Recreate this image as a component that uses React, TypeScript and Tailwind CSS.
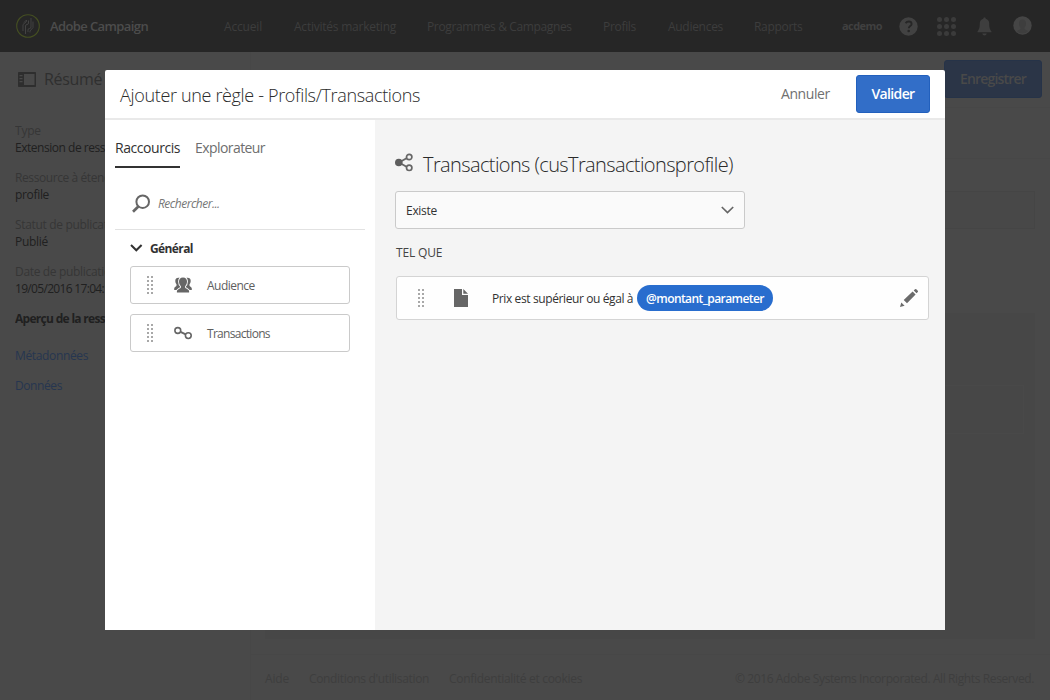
import React from "react";

const nav = [
  { label: "Accueil", style: "w-[70px] tracking-[-0.18px]" },
  { label: "Activités marketing", style: "w-[133px] tracking-[-0.23px]" },
  { label: "Programmes & Campagnes", style: "w-[176px] tracking-[-0.37px]" },
  { label: "Profils", style: "w-[65px] tracking-[-0.31px]" },
  { label: "Audiences", style: "w-[86px] tracking-[-0.29px]" },
  { label: "Rapports", style: "w-[88px] tracking-[-0.3px]" },
];

const facts = [
  { label: "Type", value: "Extension de ressource", labelStyle: "tracking-[-0.2px]", valueStyle: "tracking-[-0.47px]" },
  { label: "Ressource à étendre", value: "profile", labelStyle: "tracking-[-0.41px]", valueStyle: "tracking-[-0.33px]" },
  { label: "Statut de publication", value: "Publié", labelStyle: "tracking-[-0.33px]", valueStyle: "tracking-[-0.29px]" },
  { label: "Date de publication", value: "19/05/2016 17:04:12", labelStyle: "tracking-[-0.33px]", valueStyle: "tracking-[-0.68px]" },
];

function Logo() {
  return (
    <svg className="h-6 w-6 shrink-0" viewBox="0 0 24 24" fill="none">
      <circle cx="12" cy="12" r="11.3" stroke="#454f22" strokeWidth="1.1" />
      <g stroke="#464646" strokeWidth="0.9">
        <path d="M9.500 20V12q0-1.500 1.500-1.500t1.500-1.500V6.500" />
        <path d="M7 17V10.500L10.500 7.500V6L8 8.500" />
        <path d="M15 4v9q0 1.500-1.500 1.500t-1.500 1.500v2" />
        <path d="M17 7.500v6L14 17v1.500" />
      </g>
    </svg>
  );
}

function HelpIcon() {
  return (
    <svg className="h-[19px] w-[19px]" viewBox="0 0 19 19" fill="none">
      <circle cx="9.500" cy="9.500" r="9.200" fill="#424242" />
      <path d="M6.600 6.200Q7.700 4.500 9.700 4.500c1.900 0 2.900 1 2.900 2.400 0 2.100-2.800 2.300-2.800 4.300" stroke="#262626" strokeWidth="1.900" />
      <circle cx="9.700" cy="14" r="1.300" fill="#262626" />
    </svg>
  );
}

function AppsIcon() {
  const steps = [2.5, 9.5, 16.5];
  return (
    <svg className="h-[19px] w-[19px]" viewBox="0 0 19 19" fill="#3b3b3b">
      {steps.map((y) => steps.map((x) => <circle key={`${x}-${y}`} cx={x} cy={y} r="2.500" />))}
    </svg>
  );
}

function BellIcon() {
  return (
    <svg className="h-[19px] w-[15px]" viewBox="0 0 15 19" fill="#3e3e3e">
      <path d="M7.500.5c.8 0 1.200.6 1.200 1.200 2.300.6 3.500 2.400 3.500 4.800 0 4.500.8 6.200 2.300 8v.8H.5v-.8c1.500-1.800 2.300-3.500 2.300-8 0-2.400 1.200-4.200 3.500-4.800C6.300 1.100 6.700.5 7.500.5Z" />
      <path d="M5.200 16.500h4.600Q9.300 18.500 7.500 18.500t-2.300-2Z" />
    </svg>
  );
}

function AvatarIcon() {
  return (
    <svg className="h-[19px] w-[19px]" viewBox="0 0 19 19">
      <circle cx="9.500" cy="9.500" r="9.200" fill="#454545" />
      <path d="M9.500 3.500c2.600 0 3.500 1.900 3.500 4.200 0 1.700-.7 3.200-1.500 4v1.500l3.700 1.800Q13 17.500 9.500 17.500T3.800 15l3.700-1.800v-1.500c-.8-.8-1.500-2.300-1.500-4 0-2.300.9-4.200 3.500-4.200Z" fill="#3e3e3e" />
    </svg>
  );
}

function RailIcon() {
  return (
    <svg className="h-[15px] w-[18px] shrink-0" viewBox="0 0 18 15">
      <path fillRule="evenodd" d="M.8 0h16.400q.8 0 .8.800v13.400q0 .8-.8.800H.8q-.8 0-.8-.8V.8Q0 0 .8 0ZM6 2v11h10.500V2ZM1.500 3v1.200H4.500V3Zm0 3v1.200H4.500V6Zm0 3v1.200H4.500V9Z" fill="#2e2e2e" />
    </svg>
  );
}

function Grip() {
  return (
    <svg className="h-[19px] w-[7px] shrink-0" viewBox="0 0 7 19" fill="#a8a8a8" shapeRendering="crispEdges">
      {[0, 4, 8, 12, 16].map((y) => (
        <g key={y}>
          <rect x="0" y={y} width="2" height="2" />
          <rect x="4" y={y} width="2" height="2" />
        </g>
      ))}
    </svg>
  );
}

function AudienceIcon() {
  return (
    <svg className="h-[16px] w-[18px] shrink-0" viewBox="0 0 18 16" fill="#666">
      <path d="M5.500.8C3 .2 1.300 1.500 1.300 3.800c0 1.500.4 2.600 1.200 3.500v1.300c0 .9-2.300 1.600-2.300 2.900V13h4L7 10V2Z" />
      <path d="M12.500.8c2.500-.6 4.200.7 4.200 3 0 1.500-.4 2.600-1.200 3.500v1.300c0 .9 2.300 1.600 2.300 2.900V13h-4L11 10V2Z" />
      <path d="M9 .5c2.800 0 4 1.700 4 4 0 1.900-.8 3.700-1.900 4.700v1.200c0 1 4 1.600 4 3.800V15.500H2.900v-1.300c0-2.200 4-2.800 4-3.800V9.200C5.800 8.200 5 6.400 5 4.500c0-2.300 1.200-4 4-4Z" stroke="#fff" strokeWidth="1.800" paintOrder="stroke" />
    </svg>
  );
}

function LinkIcon() {
  return (
    <svg className="h-[14px] w-[18px] shrink-0" viewBox="0 0 18 14" fill="none" stroke="#666" strokeWidth="1.600">
      <circle cx="3.800" cy="4.500" r="2.900" />
      <circle cx="14.300" cy="9.600" r="2.900" />
      <path d="M6.500 5.900L11.700 8.300" strokeWidth="2" />
    </svg>
  );
}

function ShareIcon() {
  return (
    <svg className="h-[19px] w-[18px] shrink-0" viewBox="0 0 18 19" fill="none" stroke="#666" strokeWidth="1.700">
      <path d="M4 9.500L12 5M4 9.500l8 4.500" strokeWidth="1.900" />
      <circle cx="3.800" cy="9.500" r="3.800" fill="#5e5e5e" stroke="none" />
      <circle cx="14.200" cy="4" r="2.700" fill="#f4f4f4" />
      <circle cx="14.200" cy="14.800" r="2.700" fill="#f4f4f4" />
    </svg>
  );
}

function RuleCard({ icon, children }: { icon: React.ReactNode; children: React.ReactNode }) {
  return (
    <div className="flex h-[38px] w-[220px] items-center rounded-[3px] border border-[#cacaca] bg-white pl-[16px]">
      <Grip />
      <div className="ml-[20px] flex w-[33px]">{icon}</div>
      {children}
    </div>
  );
}

function Dialog() {
  return (
    <div className="absolute top-[70px] left-[105px] flex h-[560px] w-[840px] flex-col rounded-t-[2px] bg-white">
      <header className="flex h-[50px] shrink-0 items-center border-b-2 border-[#e9e9e9] pr-[15px] pl-[15px]">
        <h1 className="grow pt-[3px] text-[18px] font-light tracking-[-0.34px] text-[#2a2a2a]">Ajouter une règle - Profils/Transactions</h1>
        <button className="w-[75px] pb-[2px] text-left text-[14px] tracking-[-0.42px] text-[#707070]">Annuler</button>
        <button className="h-[38px] w-[74px] rounded-[3px] border border-[#2260bd] bg-[#326ec8] pb-[2px] text-[14px] font-semibold tracking-[-0.64px] text-white">Valider</button>
      </header>
      <div className="flex grow">
        <aside className="w-[270px] shrink-0 px-[10px]">
          <nav className="flex h-[48px] gap-[15px] text-[14px]">
            <span className="flex w-[65px] items-center border-b-2 border-[#323232] pt-[8px] tracking-[-0.45px] whitespace-nowrap text-[#323232]">Raccourcis</span>
            <span className="flex items-center pt-[6px] tracking-[-0.57px] text-[#6e6e6e]">Explorateur</span>
          </nav>
          <div className="flex h-[62px] items-center border-b border-[#e2e2e2] pt-[10px] pl-[17px]">
            <svg className="h-[19px] w-[19px] shrink-0" viewBox="0 0 19 19" fill="none" stroke="#666">
              <circle cx="10.700" cy="7.700" r="6.300" strokeWidth="2" />
              <path d="M6.300 12.500L1 17.700" strokeWidth="2.700" />
            </svg>
            <span className="ml-[7px] text-[12px] tracking-[-0.5px] text-[#777] italic">Rechercher...</span>
          </div>
          <div className="flex h-[36px] items-center pl-[15px]">
            <svg className="h-[8px] w-[13px]" viewBox="0 0 13 8" fill="none" stroke="#323232" strokeWidth="2">
              <path d="M1 1l5.300 5.300L11.600 1" />
            </svg>
            <span className="ml-[7px] pt-px text-[12px] font-bold tracking-[-0.6px] text-[#323232]">Général</span>
          </div>
          <div className="flex flex-col gap-[10px] pl-[15px]">
            <RuleCard icon={<AudienceIcon />}>
              <span className="pt-[2px] text-[12px] tracking-[-0.52px] text-[#5e5e5e]">Audience</span>
            </RuleCard>
            <RuleCard icon={<LinkIcon />}>
              <span className="pt-[2px] text-[12px] tracking-[-0.7px] text-[#5e5e5e]">Transactions</span>
            </RuleCard>
          </div>
        </aside>
        <main className="grow bg-[#f4f4f4] pl-[20px]">
          <div className="mt-[28px] flex h-[30px] items-center">
            <div className="pb-[2px]"><ShareIcon /></div>
            <h2 className="ml-[10px] pt-[3px] text-[20px] font-light tracking-[-0.61px] text-[#2a2a2a]">Transactions (cusTransactionsprofile)</h2>
          </div>
          <div className="mt-[13px] flex h-[38px] w-[350px] items-center justify-between rounded-[3px] border border-[#cacaca] bg-[#fafafa] pr-[10px] pl-[10px]">
            <span className="pt-px text-[12px] tracking-[-0.29px] text-[#323232]">Existe</span>
            <svg className="h-[8px] w-[13px]" viewBox="0 0 13 8" fill="none" stroke="#666" strokeWidth="1.700">
              <path d="M.8 1l5.700 5.500L12.200 1" />
            </svg>
          </div>
          <div className="flex h-[47px] items-center pt-px pl-[1px] text-[12px] tracking-[-0.15px] text-[#444]">TEL QUE</div>
          <div className="ml-[1px] flex h-[44px] w-[533px] items-center rounded-[3px] border border-[#d4d4d4] bg-[#fefefe] pr-[10px] pl-[21px]">
            <Grip />
            <svg className="ml-[29px] h-[18px] w-[14px] shrink-0" viewBox="0 0 14 18" fill="#666">
              <path d="M0 0h8v6h6v12H0ZM9.300 0L14 4.700H9.300Z" />
            </svg>
            <span className="ml-[24px] w-[145px] pt-[2px] text-[12px] tracking-[-0.39px] whitespace-nowrap text-[#323232]">Prix est supérieur ou égal à</span>
            <span className="flex h-[26px] w-[136px] items-center justify-center rounded-full bg-[#286dce] pt-px text-[12px] font-semibold tracking-[-0.57px] text-white">@montant_parameter</span>
            <svg className="ml-auto h-[18px] w-[18px]" viewBox="0 0 18 18" fill="#6b6b6b">
              <path d="M0 18l1.300-4.600 3.300 3.300ZM3.700 11.100L12.600 2.600l3 3L7 14.300ZM13.700 1.600L15 .3q.7-.5 1.300 0l1.500 1.500q.4.600 0 1.200l-1.300 1.300Z" />
            </svg>
          </div>
        </main>
      </div>
    </div>
  );
}

export default function App() {
  return (
    <div className="relative flex h-[700px] w-[1050px] flex-col overflow-hidden bg-[#494949] font-['Open_Sans','Noto_Sans',sans-serif] text-[12px]">
      <header className="flex h-[52px] shrink-0 items-center bg-[#262626] pl-[16px] text-[#3d3d3d]">
        <Logo />
        <span className="ml-[10px] w-[174px] pt-[2px] text-[13px] font-semibold tracking-[-0.6px] text-[#4c4c4c]">Adobe Campaign</span>
        {nav.map((item) => (
          <span key={item.label} className={`shrink-0 pt-px whitespace-nowrap ${item.style}`}>{item.label}</span>
        ))}
        <span className="w-[57px] shrink-0 text-[11px] font-bold tracking-[-0.56px] text-[#404040]">acdemo</span>
        <div className="flex w-[136px] shrink-0 items-center">
          <HelpIcon />
          <span className="ml-[19px]"><AppsIcon /></span>
          <span className="ml-[21px]"><BellIcon /></span>
          <span className="ml-[21px] pb-[2px]"><AvatarIcon /></span>
        </div>
      </header>
      <div className="flex grow">
        <aside className="w-[250px] shrink-0 px-[15px]">
          <div className="flex h-[54px] items-center pl-[3px] text-[#2f2f2f]">
            <RailIcon />
            <span className="ml-[8px] text-[16px] font-medium tracking-[-0.3px]">Résumé</span>
          </div>
          <dl className="mt-[16px] w-[90px] overflow-hidden leading-[17px] whitespace-nowrap">
            {facts.map((fact) => (
              <div key={fact.label} className="mb-[13px]">
                <dt className={`overflow-hidden text-[#363636] ${fact.labelStyle}`}>{fact.label}</dt>
                <dd className={`overflow-hidden text-[#202020] ${fact.valueStyle}`}>{fact.value}</dd>
              </div>
            ))}
          </dl>
          <p className="w-[90px] overflow-hidden leading-[17px] font-bold tracking-[-0.7px] whitespace-nowrap text-[#202020]">Aperçu de la ressource</p>
          <div className="mt-[20px] flex flex-col gap-[13px] leading-[17px] text-[#263650]">
            <span className="tracking-[-0.36px]">Métadonnées</span>
            <span className="tracking-[-0.41px]">Données</span>
          </div>
        </aside>
        <div className="flex grow flex-col border-l border-[#474747]">
          <div className="flex h-[56px] items-start justify-end border-b border-[#474747] pt-[8px] pr-[8px]">
            <div className="flex h-[38px] w-[98px] items-center justify-center rounded-[3px] border border-[#263348] bg-[#2b3547] pb-px text-[14px] font-semibold tracking-[-0.82px] text-[#494949]">Enregistrer</div>
          </div>
          <div className="h-[51px] border-b border-[#474747]" />
          <div className="mr-[15px] ml-[14px] mt-[32px] h-[38px] border border-[#454545] bg-[#484848]" />
          <div className="mr-[15px] ml-[14px] mt-[84px] h-[326px] border border-[#474747] bg-[#474747] px-[10px] pt-[71px]">
            <div className="h-[49px] border border-[#494949]" />
          </div>
          <footer className="mt-[15px] flex h-[46px] items-center border-t border-[#474747] pt-[3px] pr-[16px] pl-[14px] text-[#3e3e3e]">
            <span className="w-[44px] tracking-[-0.18px]">Aide</span>
            <span className="w-[140px] tracking-[-0.34px] whitespace-nowrap">Conditions d'utilisation</span>
            <span className="tracking-[-0.3px]">Confidentialité et cookies</span>
            <span className="ml-auto tracking-[-0.39px]">© 2016 Adobe Systems Incorporated. All Rights Reserved.</span>
          </footer>
        </div>
      </div>
      <Dialog />
    </div>
  );
}
